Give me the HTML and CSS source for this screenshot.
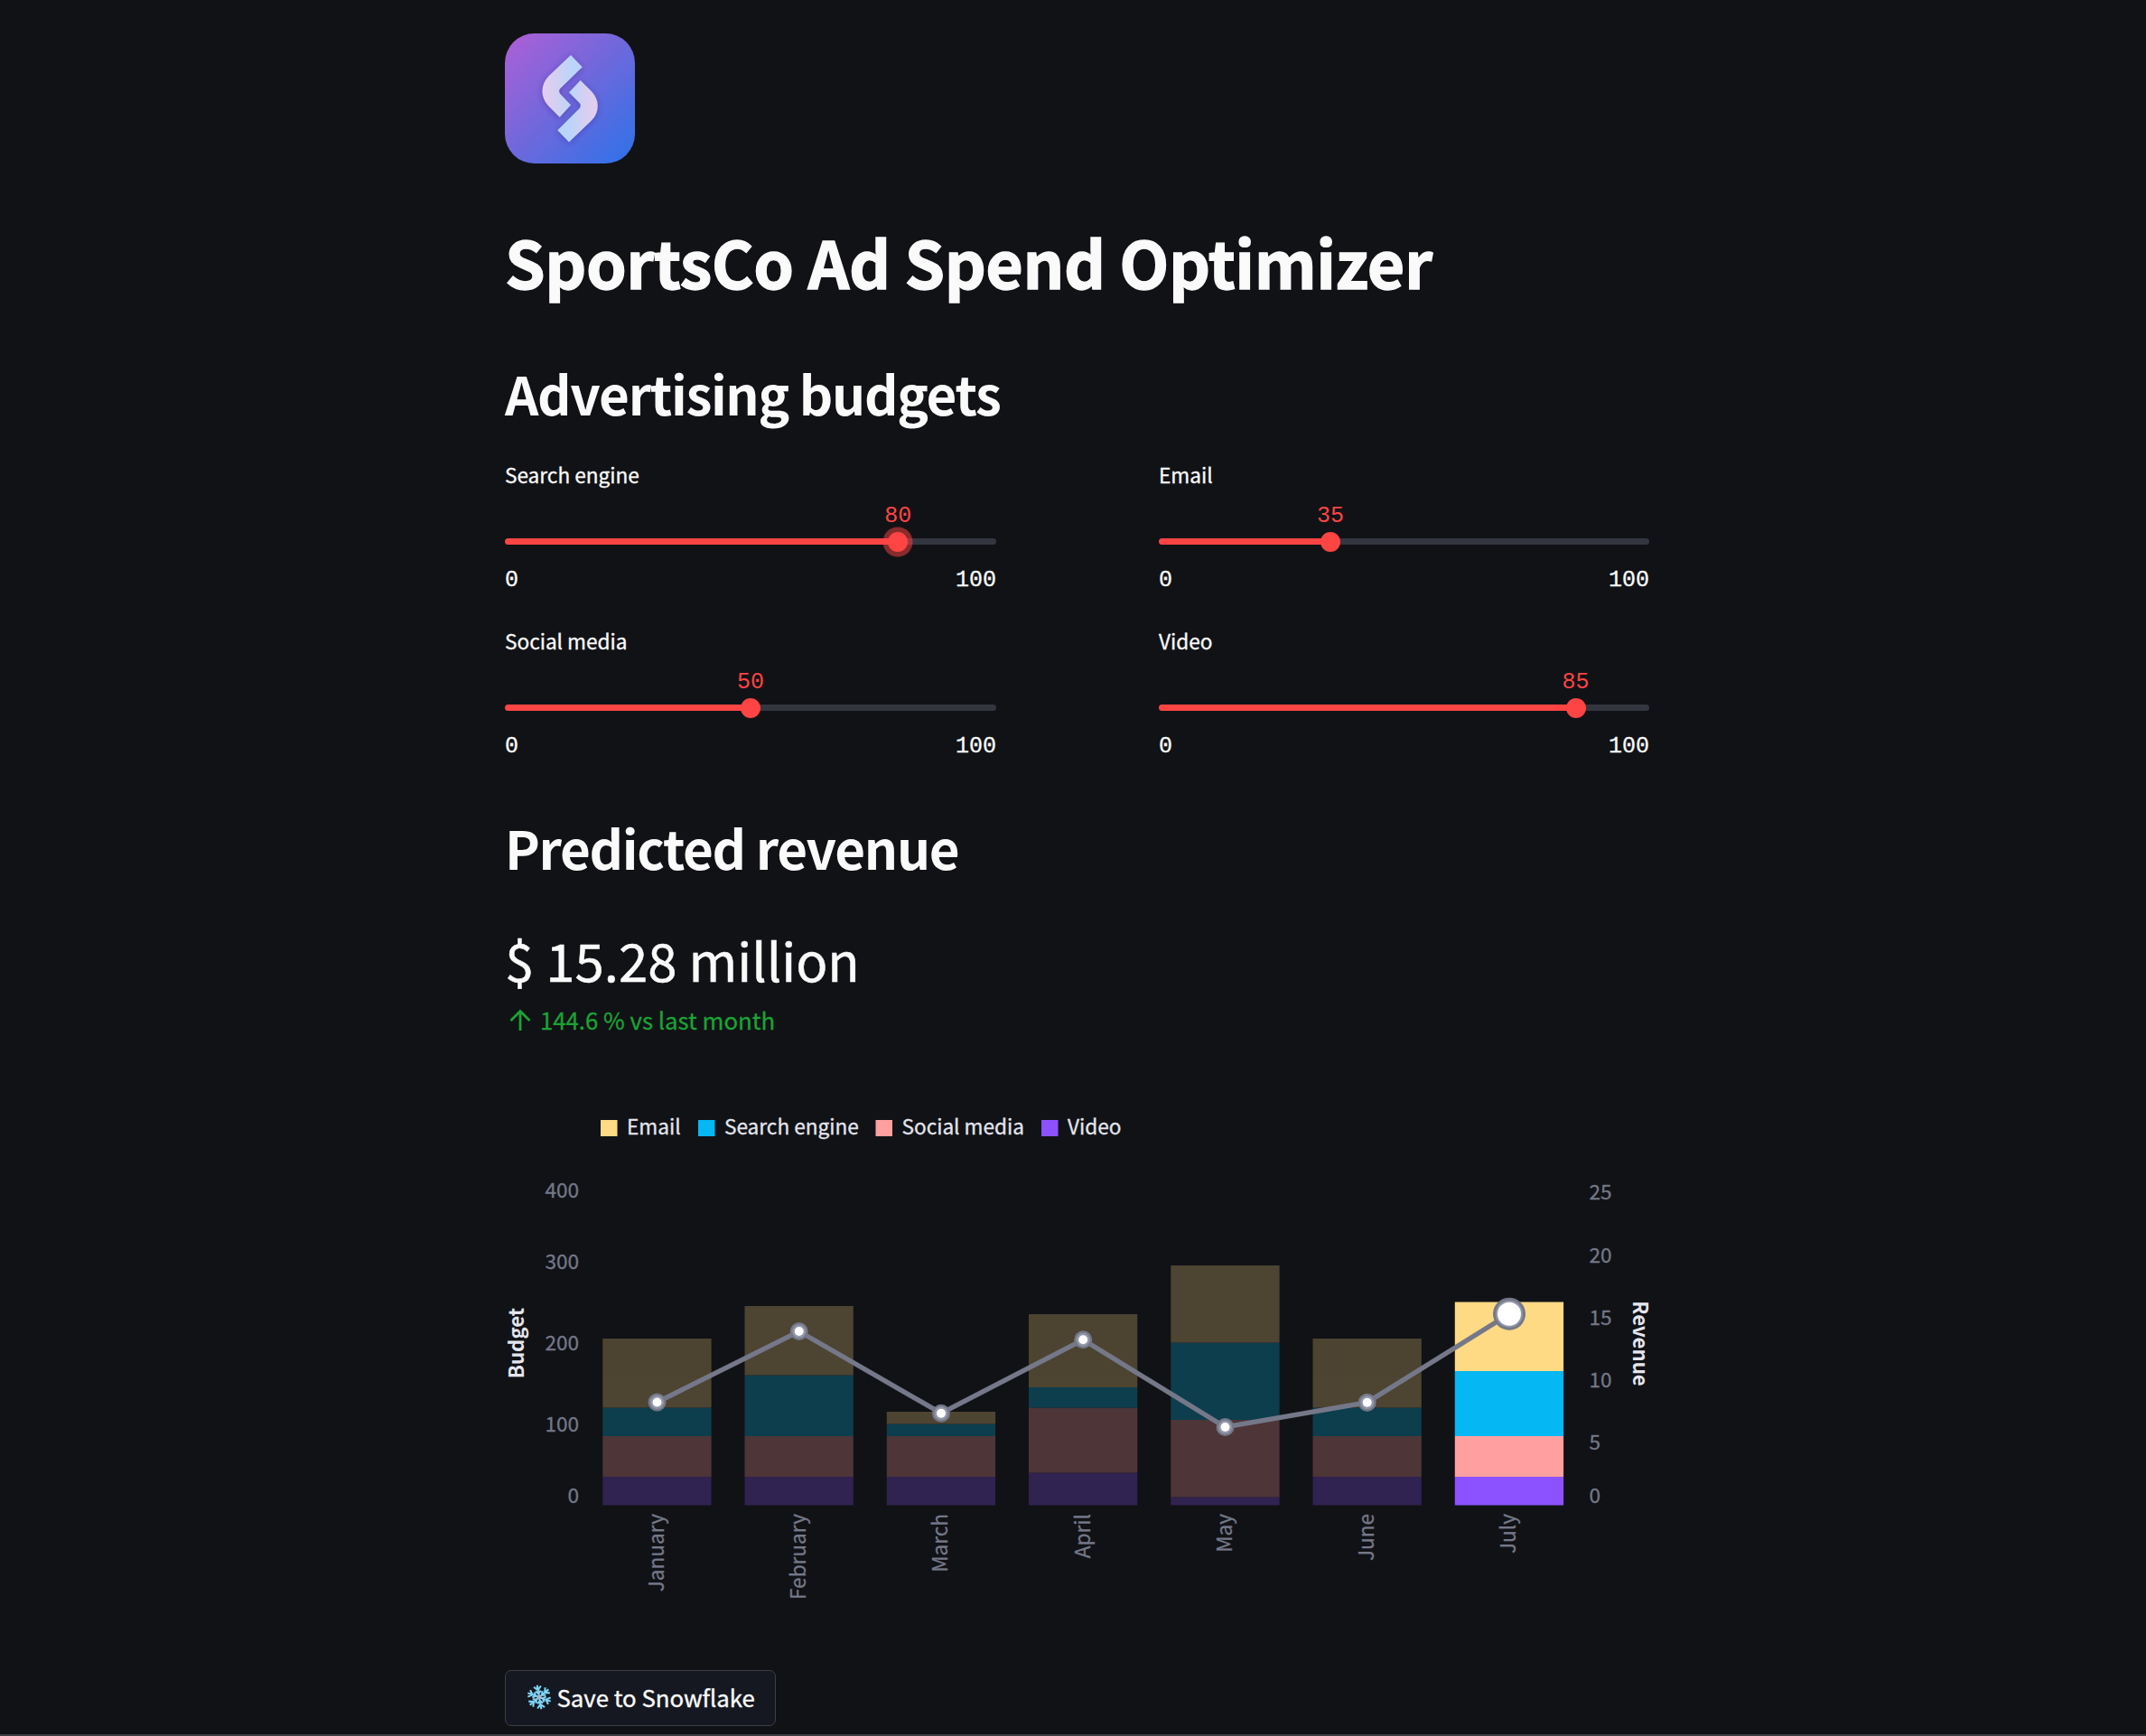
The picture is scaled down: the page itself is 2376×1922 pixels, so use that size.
FILE: index.html
```html
<!DOCTYPE html>
<html lang="en">
<head>
<meta charset="utf-8">
<title>SportsCo Ad Spend Optimizer</title>
<link rel="stylesheet" href="styles.css">
</head>
<body>
<main class="page">
  <svg class="logo" viewBox="57 52 432 432" aria-hidden="true">
    <defs>
      <linearGradient id="tile" x1="0" y1="0" x2="1" y2="1">
        <stop offset="0" stop-color="#b05fd3"/><stop offset=".16" stop-color="#9a62d8"/><stop offset=".5" stop-color="#6e68dc"/><stop offset=".9" stop-color="#3a70e6"/><stop offset="1" stop-color="#2b70e8"/>
      </linearGradient>
      <linearGradient id="bladeLeft"><stop offset="0" stop-color="#e6cdef"/><stop offset=".35" stop-color="#d3d0f2"/><stop offset=".75" stop-color="#b9d5fa"/><stop offset="1" stop-color="#bcd3f8"/></linearGradient>
      <linearGradient id="bladeRight"><stop offset="0" stop-color="#bcd3f8"/><stop offset=".3" stop-color="#b9d5fa"/><stop offset=".65" stop-color="#d3d0f2"/><stop offset="1" stop-color="#e6cdef"/></linearGradient>
      <filter id="soft" x="-30%" y="-30%" width="160%" height="160%"><feDropShadow dx="0" dy="4" stdDeviation="10" flood-color="#3a2a90" flood-opacity=".5"/></filter>
    </defs>
    <rect x="57" y="52" width="432" height="432" rx="98" fill="url(#tile)"/>
    <g filter="url(#soft)">
      <path fill="url(#bladeLeft)" d="M276 124 L314 164 L240 236 Q234 243 240 252 L276 290 L239 330 L201 292 C175 263 175 224 201 195 Z"/>
      <path fill="url(#bladeRight)" d="M308 208 L270 248 L305 283 Q312 291 305 301 L232 374 L270 413 L345 341 C372 314 372 273 345 245 Z"/>
    </g>
  </svg>

  <h1 class="title">SportsCo Ad Spend Optimizer</h1>
  <h2 class="heading">Advertising budgets</h2>

  <section class="sliders">
    <div class="slider is-active" style="--value: 80%">
      <div class="slider-label">Search engine</div>
      <div class="slider-value"><span>80</span></div>
      <div class="slider-track"><i class="slider-thumb"></i></div>
      <div class="slider-range"><span>0</span><span>100</span></div>
    </div>
    <div class="slider" style="--value: 35%">
      <div class="slider-label">Email</div>
      <div class="slider-value"><span>35</span></div>
      <div class="slider-track"><i class="slider-thumb"></i></div>
      <div class="slider-range"><span>0</span><span>100</span></div>
    </div>
    <div class="slider" style="--value: 50%">
      <div class="slider-label">Social media</div>
      <div class="slider-value"><span>50</span></div>
      <div class="slider-track"><i class="slider-thumb"></i></div>
      <div class="slider-range"><span>0</span><span>100</span></div>
    </div>
    <div class="slider" style="--value: 85%">
      <div class="slider-label">Video</div>
      <div class="slider-value"><span>85</span></div>
      <div class="slider-track"><i class="slider-thumb"></i></div>
      <div class="slider-range"><span>0</span><span>100</span></div>
    </div>
  </section>

  <h2 class="heading heading-revenue">Predicted revenue</h2>
  <div class="metric">$ 15.28 million</div>
  <div class="delta">
    <svg class="delta-arrow" viewBox="0 0 24 24" aria-hidden="true"><path d="M12 24V2.500M1.500 13L12 2.500l10.500 10.500"/></svg>
    <span>144.6 % vs last month</span>
  </div>

  <svg class="chart" viewBox="559 1200 1280 600" role="img" aria-label="Budget and revenue by month">
    <g class="legend">
      <rect class="email" x="665" y="1240" width="18.500" height="18"/><text x="694" y="1256">Email</text>
      <rect class="search" x="773" y="1240" width="18.500" height="18"/><text x="802" y="1256">Search engine</text>
      <rect class="social" x="969.500" y="1240" width="18.500" height="18"/><text x="998.500" y="1256">Social media</text>
      <rect class="video" x="1153" y="1240" width="18.500" height="18"/><text x="1182" y="1256">Video</text>
    </g>
    <g class="axis axis-left">
      <text x="641" y="1325.700">400</text><text x="641" y="1405">300</text><text x="641" y="1494.700">200</text><text x="641" y="1584.700">100</text><text x="641" y="1663.700">0</text>
    </g>
    <g class="axis">
      <text x="1759.500" y="1328">25</text><text x="1759.500" y="1397.700">20</text><text x="1759.500" y="1466.700">15</text><text x="1759.500" y="1536">10</text><text x="1759.500" y="1605.300">5</text><text x="1759.500" y="1663.700">0</text>
    </g>
    <text class="axis-title" transform="translate(579.500 1487) rotate(-90)">Budget</text>
    <text class="axis-title" transform="translate(1807.500 1487.500) rotate(90)">Revenue</text>

    <!-- bars: one user unit = one unit of budget, measured up from the baseline -->
    <g class="bars">
      <g class="dim" transform="translate(667.300 1666.500) scale(1 -.9)"><rect class="video" width="120.300" height="35"/><rect class="social" y="35" width="120.300" height="50"/><rect class="search" y="85" width="120.300" height="35"/><rect class="email" y="120" width="120.300" height="85"/></g>
      <g class="dim" transform="translate(824.500 1666.500) scale(1 -.9)"><rect class="video" width="120.300" height="35"/><rect class="social" y="35" width="120.300" height="50"/><rect class="search" y="85" width="120.300" height="75"/><rect class="email" y="160" width="120.300" height="85"/></g>
      <g class="dim" transform="translate(981.800 1666.500) scale(1 -.9)"><rect class="video" width="120.300" height="35"/><rect class="social" y="35" width="120.300" height="50"/><rect class="search" y="85" width="120.300" height="15"/><rect class="email" y="100" width="120.300" height="15"/></g>
      <g class="dim" transform="translate(1139 1666.500) scale(1 -.9)"><rect class="video" width="120.300" height="40"/><rect class="social" y="40" width="120.300" height="80"/><rect class="search" y="120" width="120.300" height="25"/><rect class="email" y="145" width="120.300" height="90"/></g>
      <g class="dim" transform="translate(1296.300 1666.500) scale(1 -.9)"><rect class="video" width="120.300" height="10"/><rect class="social" y="10" width="120.300" height="95"/><rect class="search" y="105" width="120.300" height="95"/><rect class="email" y="200" width="120.300" height="95"/></g>
      <g class="dim" transform="translate(1453.500 1666.500) scale(1 -.9)"><rect class="video" width="120.300" height="35"/><rect class="social" y="35" width="120.300" height="50"/><rect class="search" y="85" width="120.300" height="35"/><rect class="email" y="120" width="120.300" height="85"/></g>
      <g transform="translate(1610.800 1666.500) scale(1 -.9)"><rect class="video" width="120.300" height="35"/><rect class="social" y="35" width="120.300" height="50"/><rect class="search" y="85" width="120.300" height="80"/><rect class="email" y="165" width="120.300" height="85"/></g>
    </g>

    <polyline class="trend" points="727.500,1552.500 884.700,1474 1042,1564.700 1199.200,1483.300 1356.500,1580 1513.700,1552.700 1671,1454.700"/>
    <g class="points">
      <g transform="translate(727.500 1552.500)"><circle r="10"/><circle class="ring" r="7.500"/><circle class="core" r="5"/></g>
      <g transform="translate(884.700 1474)"><circle r="10"/><circle class="ring" r="7.500"/><circle class="core" r="5"/></g>
      <g transform="translate(1042 1564.700)"><circle r="10"/><circle class="ring" r="7.500"/><circle class="core" r="5"/></g>
      <g transform="translate(1199.200 1483.300)"><circle r="10"/><circle class="ring" r="7.500"/><circle class="core" r="5"/></g>
      <g transform="translate(1356.500 1580)"><circle r="10"/><circle class="ring" r="7.500"/><circle class="core" r="5"/></g>
      <g transform="translate(1513.700 1552.700)"><circle r="10"/><circle class="ring" r="7.500"/><circle class="core" r="5"/></g>
      <g transform="translate(1671 1454.700)"><circle r="18"/><circle class="ring" r="15"/><circle class="core" r="13"/></g>
    </g>

    <g class="axis axis-months">
      <text transform="translate(734.800 1676) rotate(-90)">January</text>
      <text transform="translate(892 1676) rotate(-90)">February</text>
      <text transform="translate(1049 1676) rotate(-90)">March</text>
      <text transform="translate(1206.500 1676) rotate(-90)">April</text>
      <text transform="translate(1364 1676) rotate(-90)">May</text>
      <text transform="translate(1521 1676) rotate(-90)">June</text>
      <text transform="translate(1678.300 1676) rotate(-90)">July</text>
    </g>
  </svg>

  <button class="save" type="button">
    <svg class="snowflake" viewBox="-14 -14 28 28" aria-hidden="true">
      <defs><g id="arm"><path d="M0 0V-13.500M0 -8L-4 -12M0 -8L4 -12M0 -4L-3 -7M0 -4L3 -7"/></g></defs>
      <g transform="rotate(-10)"><use href="#arm"/><use href="#arm" transform="rotate(60)"/><use href="#arm" transform="rotate(120)"/><use href="#arm" transform="rotate(180)"/><use href="#arm" transform="rotate(240)"/><use href="#arm" transform="rotate(300)"/></g>
      <circle class="snowflake-core" r="2.500"/>
    </svg>
    <span>Save to Snowflake</span>
  </button>
</main>
<footer class="bottom-edge"></footer>
</body>
</html>
```

FILE: styles.css
```css
* { box-sizing: border-box; }

body {
  margin: 0;
  height: 1922px;
  display: flex;
  flex-direction: column;
  justify-content: space-between;
  overflow: hidden;
  background: #111216;
  color: #fafafa;
  font-family: "Noto Sans CJK JP", "Noto Sans", sans-serif;
}

.page {
  width: 1267px;
  margin-left: 559px;
  padding-top: 37px;
  display: flex;
  flex-direction: column;
  align-items: flex-start;
}

.logo { display: block; width: 144px; height: 144px; }

.title {
  margin: 64px 0 0;
  font-size: 71.6px;
  font-weight: 700;
  line-height: 88px;
  letter-spacing: -.45px;
  white-space: nowrap;
  -webkit-text-stroke: 1.3px currentColor;
}

.heading {
  margin: 65.5px 0 0;
  font-size: 58.3px;
  font-weight: 600;
  line-height: 72px;
  letter-spacing: -1.31px;
  white-space: nowrap;
}

.heading-revenue { margin-top: 67px; }

.sliders {
  align-self: stretch;
  margin-top: 39.5px;
  display: grid;
  grid-template-columns: 544px 543px;
  justify-content: space-between;
  row-gap: 43px;
}

.slider { height: 141px; display: flex; flex-direction: column; }
.slider-label { padding-top: 1px; font-size: 22.6px; line-height: 30px; -webkit-text-stroke: .3px currentColor; }

.slider-value,
.slider-range {
  font-family: "Liberation Mono", monospace;
  font-size: 25px;
  line-height: 30px;
}

.slider-value { margin: 15.5px 0 9.5px var(--value); color: #ff4444; width: 0; display: flex; justify-content: center; }

.slider-track {
  height: 7px;
  border-radius: 3.5px;
  display: flex;
  align-items: center;
  background: linear-gradient(to right, #ff4444 var(--value), #34363f var(--value));
}

.slider-thumb {
  width: 22px;
  height: 22px;
  flex: none;
  margin-left: calc(var(--value) - 11px);
  border-radius: 50%;
  background: #ff4444;
}

.is-active .slider-thumb { box-shadow: 0 0 0 5.5px rgba(255, 68, 68, .5); }
.slider-range { margin-top: 24.5px; display: flex; justify-content: space-between; -webkit-text-stroke: .3px currentColor; }

.metric { margin-top: 51.5px; font-size: 58.1px; line-height: 72px; white-space: nowrap; -webkit-text-stroke: .5px currentColor; }

.delta {
  margin-top: 13px;
  padding-left: 5px;
  display: flex;
  align-items: center;
  gap: 10px;
  color: #1ba334;
  font-size: 25.75px;
  line-height: 36px;
  -webkit-text-stroke: .3px currentColor;
}

.delta-arrow { width: 24px; height: 24px; fill: none; stroke: currentColor; stroke-width: 2.8; }

.chart { display: block; width: 1280px; height: 600px; margin-top: 53.5px; overflow: visible; font-size: 22.6px; }
.legend text { fill: #e4e5ee; stroke: #e4e5ee; stroke-width: .3px; }
.email { fill: #ffda85; }
.search { fill: #05b7f3; }
.social { fill: #ff9f9f; }
.video { fill: #8c52ff; }
.dim { opacity: .25; }
.dim .search { fill: #05c0f3; }
.axis text { fill: #747888; stroke: #747888; stroke-width: .3px; }
.axis-left text, .axis-months text { text-anchor: end; }
.axis-title { fill: #e4e5ee; font-size: 22.2px; font-weight: 700; text-anchor: middle; }
.trend { fill: none; stroke: #747888; stroke-width: 5.4; }
.points circle { fill: #747888; }
.points .ring { fill: #9297a8; }
.points .core { fill: #fff; }

.save {
  width: 300px;
  height: 62px;
  margin: 49px 0 0;
  padding: 0 0 2px 22.5px;
  display: flex;
  align-items: center;
  gap: 6px;
  background: #151820;
  border: 1px solid #3d3f44;
  border-radius: 7px;
  color: #fafafa;
  font-family: inherit;
  font-size: 25.75px;
  line-height: 36px;
  white-space: nowrap;
  -webkit-text-stroke: .35px currentColor;
}

.snowflake { width: 28px; height: 28px; flex: none; fill: none; stroke: #7fd4f5; stroke-width: 2.1; }
.snowflake-core { fill: #a9b6c8; stroke: none; }

.bottom-edge { height: 2px; background: #3d3e42; }
```
